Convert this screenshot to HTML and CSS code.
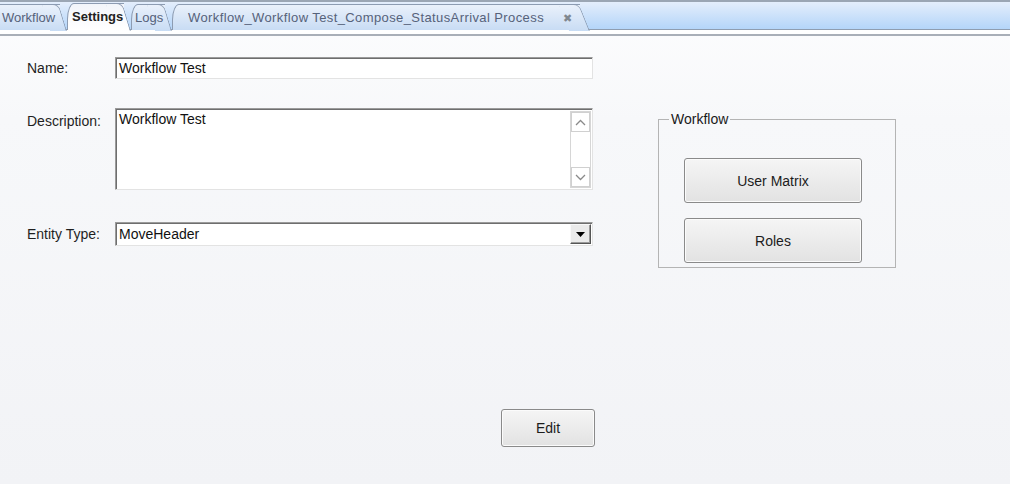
FILE: index.html
```html
<!DOCTYPE html>
<html>
<head>
<meta charset="utf-8">
<link rel="stylesheet" href="styles.css">
</head>
<body>
<div class="tabstrip">
  <div class="tab tab-first">Workflow</div>
  <div class="tab tab-active">Settings</div>
  <div class="tab tab-logs">Logs</div>
  <div class="tab tab-long">Workflow_Workflow Test_Compose_StatusArrival Process<span class="close">&#x2716;</span></div>
</div>
<div class="sep"></div>
<div class="content">
  <div class="form">
    <div class="row row-name">
      <label class="lbl">Name:</label>
      <div class="field input">Workflow Test</div>
    </div>
    <div class="row row-desc">
      <label class="lbl lbl-top">Description:</label>
      <div class="field textarea">
        <div class="ta-text">Workflow Test</div>
        <div class="vscroll">
          <div class="sb-btn"><svg width="11" height="7" viewBox="0 0 11 7"><path d="M1 6 L5.5 1.5 L10 6" fill="none" stroke="#8a8a8a" stroke-width="1.3"/></svg></div>
          <div class="sb-track"></div>
          <div class="sb-btn"><svg width="11" height="7" viewBox="0 0 11 7"><path d="M1 1 L5.5 5.5 L10 1" fill="none" stroke="#8a8a8a" stroke-width="1.3"/></svg></div>
        </div>
      </div>
    </div>
    <div class="row row-entity">
      <label class="lbl">Entity Type:</label>
      <div class="field select">
        <span class="sel-text">MoveHeader</span>
        <div class="dd-btn"><svg width="9" height="5" viewBox="0 0 9 5"><path d="M0 0 H9 L4.5 5 Z" fill="#000"/></svg></div>
      </div>
    </div>
    <div class="actions">
      <button class="btn btn-edit">Edit</button>
    </div>
  </div>
  <fieldset class="group">
    <legend>Workflow</legend>
    <div class="group-body">
      <button class="btn btn-wide">User Matrix</button>
      <button class="btn btn-wide">Roles</button>
    </div>
  </fieldset>
</div>
</body>
</html>
```
FILE: styles.css
```css
* { box-sizing: border-box; }
html, body { margin: 0; padding: 0; }
body {
  width: 1010px;
  height: 484px;
  overflow: hidden;
  font-family: "Liberation Sans", Arial, sans-serif;
  font-size: 14px;
  color: #1a1a1a;
  background: linear-gradient(#fdfdfe 0, #f7f8fa 120px, #f2f3f6 484px);
}
.tabstrip {
  height: 30px;
  display: flex;
  align-items: flex-end;
  border-top: 2px solid #9ba6b4;
  border-bottom: 1px solid #8f9db0;
  background: linear-gradient(#e4eefc, #b4d5f9);
  position: relative;
  z-index: 0;
}
.tab {
  height: 26px;
  margin-bottom: -1px;
  margin-right: 7px;
  font-size: 13px;
  line-height: 25px;
  color: #56627a;
  background: linear-gradient(#eaf1fb, #c8dcf4);
  border: 1px solid #8d9cb2;
  border-right: none;
  border-bottom: none;
  border-radius: 7px 0 0 0 / 16px 0 0 0;
  white-space: nowrap;
  position: relative;
  z-index: 1;
}
.tab::after {
  content: "";
  position: absolute;
  top: -1px;
  right: -7px;
  width: 16px;
  height: 26px;
  background: inherit;
  border-top: 1px solid #8d9cb2;
  border-right: 1px solid #8d9cb2;
  border-radius: 0 6px 0 0;
  transform: skewX(17deg);
  transform-origin: bottom left;
  z-index: -1;
}
.tab-first { margin-left: -4px; width: 64px; padding-left: 5px; border-radius: 0; }
.tab-active {
  width: 57px;
  height: 27px;
  line-height: 26px;
  font-weight: bold;
  color: #222;
  background: linear-gradient(#f2f5fa, #ffffff);
  padding-left: 4px;
  z-index: 2;
}
.tab-active::after { height: 27px; }
.tab-logs { width: 34px; padding-left: 3px; }
.tab-long { width: 408px; padding-left: 15px; letter-spacing: 0.4px; }
.tab-long::after { right: -10px; width: 20px; transform: skewX(22deg); }
.close {
  position: absolute;
  left: 390px;
  top: 1px;
  font-size: 11px;
  letter-spacing: 0;
  color: #80878f;
}
.sep {
  height: 6px;
  background: #fff;
  border-bottom: 2px solid #a9afb8;
}
.content {
  display: flex;
  align-items: flex-start;
  padding: 21px 0 0 27px;
}
.form {
  width: 567px;
  display: flex;
  flex-direction: column;
}
.row {
  display: grid;
  grid-template-columns: 88px 478px;
  align-items: center;
}
.row-desc { margin-top: 29px; align-items: start; }
.row-entity { margin-top: 32px; }
.lbl { color: #1f1f1f; }
.lbl-top { padding-top: 5px; }
.field {
  background: #fff;
  border-top: 1px solid #9b9b9b;
  border-left: 1px solid #9b9b9b;
  border-right: 1px solid #e3e3e3;
  border-bottom: 1px solid #e3e3e3;
  box-shadow: inset 1px 1px 0 #6e6e6e;
  color: #111;
}
.input {
  height: 22px;
  line-height: 20px;
  padding-left: 3px;
}
.textarea {
  height: 82px;
  display: flex;
  padding: 0 1px 1px 3px;
}
.ta-text { flex: 1; line-height: 19px; padding-top: 1px; }
.vscroll {
  width: 21px;
  margin-top: 2px;
  display: flex;
  flex-direction: column;
  border: 1px solid #d6d6d6;
  background: #fff;
}
.sb-btn {
  height: 20px;
  display: flex;
  align-items: center;
  justify-content: center;
  border: 1px solid #d0d0d0;
  background: #fff;
}
.sb-track { flex: 1; background: #fff; }
.select {
  height: 24px;
  display: flex;
  align-items: center;
  padding: 0 1px 0 3px;
}
.sel-text { flex: 1; }
.dd-btn {
  width: 21px;
  height: 20px;
  display: flex;
  align-items: center;
  justify-content: center;
  background: #eaeaea;
  border-top: 1px solid #f8f8f8;
  border-left: 1px solid #f8f8f8;
  border-right: 1px solid #555;
  border-bottom: 1px solid #555;
  box-shadow: inset -1px -1px 0 #9a9a9a;
}
.actions {
  display: flex;
  justify-content: flex-end;
  margin-top: 163px;
  margin-right: -1px;
}
.btn {
  font-family: "Liberation Sans", Arial, sans-serif;
  font-size: 14px;
  color: #1c1c1c;
  background: linear-gradient(#f5f5f5, #e2e2e2);
  border: 1px solid #8a8a8a;
  border-radius: 3px;
  box-shadow: inset 0 0 0 1px #fbfbfb;
  padding: 0;
}
.btn-edit { width: 94px; height: 38px; }
.group {
  margin: 55px 0 0 64px;
  width: 238px;
  height: 156px;
  border: 1px solid #b4b4b4;
  padding: 0;
  min-width: 0;
}
.group legend {
  padding: 0 2px;
  margin-left: 10px;
  font-size: 14px;
  color: #1a1a1a;
  line-height: 14px;
}
.group-body {
  padding: 32px 0 0 25px;
  display: flex;
  flex-direction: column;
  gap: 15px;
}
.btn-wide { width: 178px; height: 45px; }
```
